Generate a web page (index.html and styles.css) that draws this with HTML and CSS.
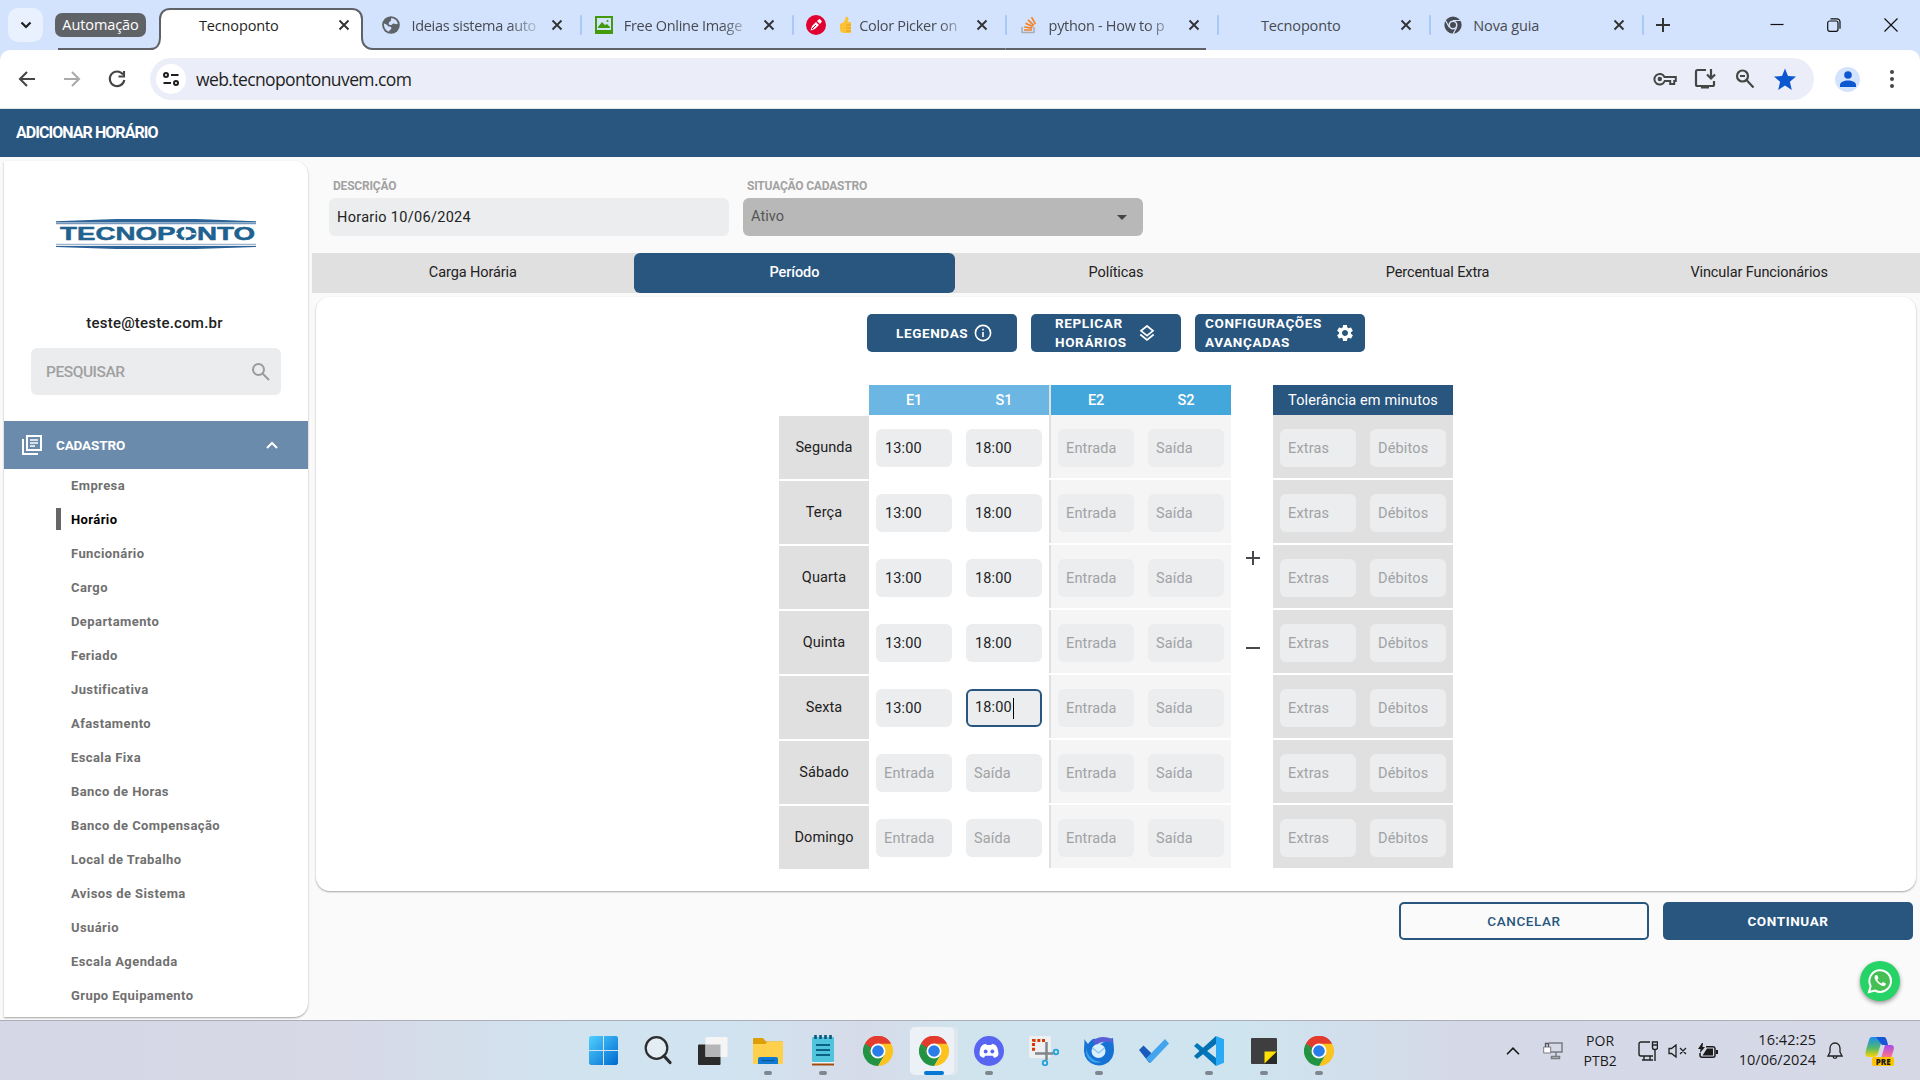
FILE: index.html
```html
<!DOCTYPE html>
<html lang="pt-BR">
<head>
<meta charset="utf-8">
<title>Tecnoponto</title>
<link rel="stylesheet" href="styles.css">
</head>
<body>
<svg class="defs" width="0" height="0">
  <symbol id="x" viewBox="0 0 12 12"><path d="M1.5 1.5l9 9M10.5 1.5l-9 9" stroke="currentColor" stroke-width="1.9" fill="none"/></symbol>
  <symbol id="chrome" viewBox="0 0 48 48">
    <path d="M24 24L3.2 12A24 24 0 0 1 44.8 12z" fill="#e33b2e"/>
    <path d="M24 12H44.8A24 24 0 0 1 24 48L34.4 30z" fill="#fcc31e"/>
    <path d="M3.2 12A24 24 0 0 0 24 48L34.4 30 24 34 13.6 30z" fill="#229342"/>
    <path d="M3.2 12A24 24 0 0 1 44.8 12H24L13.6 30z" fill="#e33b2e"/>
    <path d="M3.2 12L13.6 30 24 26z" fill="#229342"/>
    <circle cx="24" cy="24" r="12" fill="#fff"/><circle cx="24" cy="24" r="9.3" fill="#2a7de9"/>
  </symbol>
</svg>

<header class="tabstrip">
  <button class="tab-search"><svg width="12" height="8" viewBox="0 0 12 8"><path d="M1.5 1.5L6 6l4.500-4.500" fill="none" stroke="#1f1f1f" stroke-width="2.200"/></svg></button>
  <span class="group">Automação</span>
  <div class="tabs">
    <div class="tab active"><svg class="outline" width="336" height="42" viewBox="-100 0 336 42"><path d="M0 42h3c7 0 10-5 10-11V11c0-6 4-10 10-10h182c6 0 10 4 10 10v20c0 6 4 11 11 11z" fill="#fff"/><path d="M-89 41H3c7 0 10-5 10-11V11c0-6 4-10 10-10h182c6 0 10 4 10 10v19c0 6 4 11 11 11h10" fill="none" stroke="#5f6368" stroke-width="2"/></svg><i class="fav"></i><span class="title">Tecnoponto</span><svg class="close"><use href="#x"/></svg></div>
    <div class="tab grouped"><svg class="fav" viewBox="0 0 24 24"><circle cx="12" cy="12" r="11.800" fill="#5f6368"/><path d="M12 3c4 0 8 2.500 9 7-2 2-4 0-6 0-1 0-1 2-3 2s-3 0-3-2c0-3 4-2 3-7zM2.500 10c3 1 5 2 6 4 2 0 4 0 4 2 0 3-3 2-3 5-4-1-7-5-7-11z" fill="#d3e3fd"/></svg><span class="title fade">Ideias sistema auto</span><svg class="close"><use href="#x"/></svg></div>
    <div class="tab grouped"><svg class="fav" viewBox="0 0 18 18"><path d="M0 0h18v18H0zM2 2v12h14V2z" fill="#429a0d" fill-rule="evenodd"/><path d="M3 11l4-5 3 3 2-1 3 3v1H3z" fill="#429a0d"/><circle cx="12.500" cy="5" r="1" fill="#429a0d"/></svg><span class="title fade">Free Online Image</span><svg class="close"><use href="#x"/></svg></div>
    <div class="tab grouped"><svg class="fav wide" viewBox="0 0 20 20"><circle cx="10" cy="10" r="10" fill="#e1002f"/><path d="M4.500 15.500L6 11l4-4 3 3-4 4zM11 6l2.500-2.200 2.500 2.500L14 9z" fill="#fff"/><path d="M6 14l4-4" stroke="#e1002f"/></svg><svg class="thumb" width="13" height="18" viewBox="0 0 13 18"><path d="M1 8l4-2 2-5c2-1 3 1 2 5h3v11H5c-3 0-4-2-4-4z" fill="#fbc334"/><path d="M7 9h5M7 12h5M7 15h5" stroke="#e39a1b"/></svg><span class="title fade">Color Picker on</span><svg class="close"><use href="#x"/></svg></div>
    <div class="tab grouped last"><svg class="fav" viewBox="0 0 18 18"><path d="M2 11v5.500h12V11" fill="none" stroke="#a9adb2" stroke-width="1.500"/><path d="M4 14h8M4.300 11l8 1.200M5.500 7.300l7.300 3.300M8 3.800l5.800 5.500M11.500 1.200l4 7" stroke="#f48024" stroke-width="1.700"/></svg><span class="title fade">python - How to p</span><svg class="close"><use href="#x"/></svg></div>
    <div class="tab"><i class="fav"></i><span class="title">Tecnoponto</span><svg class="close"><use href="#x"/></svg></div>
    <div class="tab"><svg class="fav" viewBox="0 0 24 24"><circle cx="12" cy="12" r="11.500" fill="#474a50"/><path d="M12 6h11M7 15L2 6M17 15l-5 9" stroke="#d3e3fd" stroke-width="1.600"/><circle cx="12" cy="12" r="5" fill="#474a50" stroke="#d3e3fd" stroke-width="2"/></svg><span class="title">Nova guia</span><svg class="close"><use href="#x"/></svg></div>
  </div>
  <svg class="plus" width="14" height="14" viewBox="0 0 14 14"><path d="M7 0v14M0 7h14" stroke="#333" stroke-width="2"/></svg>
  <div class="winctl">
    <svg width="14" height="14" viewBox="0 0 14 14"><path d="M.5 6.500h13" stroke="#111" stroke-width="1.200"/></svg>
    <svg width="14" height="14" viewBox="0 0 14 14"><rect x=".7" y="3" width="10.300" height="10.300" rx="2" fill="none" stroke="#111" stroke-width="1.200"/><path d="M3.500.8H10a3 3 0 0 1 3 3v7" fill="none" stroke="#111" stroke-width="1.200"/></svg>
    <svg width="14" height="14" viewBox="0 0 14 14"><path d="M.5.5l13 13M13.500.5l-13 13" stroke="#111" stroke-width="1.200"/></svg>
  </div>
</header>

<div class="toolbar-back">
<div class="toolbar">
  <nav class="nav">
    <svg width="24" height="24" viewBox="0 0 24 24"><path d="M20 12H5M12 5l-7 7 7 7" fill="none" stroke="#444746" stroke-width="2.100"/></svg>
    <svg width="24" height="24" viewBox="0 0 24 24"><path d="M4 12h15M12 5l7 7-7 7" fill="none" stroke="#a9aaab" stroke-width="2.100"/></svg>
    <svg width="24" height="24" viewBox="0 0 24 24"><path d="M18 7.500A7.300 7.300 0 1 0 19.300 13M19 4v5.500h-5.500" fill="none" stroke="#444746" stroke-width="2.100"/></svg>
  </nav>
  <div class="omnibox">
    <span class="tune"><svg width="16" height="14" viewBox="0 0 16 14"><g fill="none" stroke="#1f1f1f" stroke-width="2"><circle cx="3" cy="3" r="2"/><path d="M8 3h7.500M.5 11H8"/><circle cx="13" cy="11" r="2"/></g></svg></span>
    <span class="url">web.tecnopontonuvem.com</span>
    <div class="actions">
      <svg width="24" height="24" viewBox="0 0 24 24"><g fill="none" stroke="#444746" stroke-width="2"><path d="M11.500 10H22.800v4h-1.600v3h-4v-3h-5.500A5.300 5.300 0 1 1 11.500 10z"/></g><circle cx="6.800" cy="12" r="2.200" fill="#444746"/></svg>
      <svg width="24" height="24" viewBox="0 0 24 24"><path d="M13 3H4.500A1.500 1.500 0 0 0 3 4.500v13A1.500 1.500 0 0 0 4.500 19h15a1.500 1.500 0 0 0 1.500-1.500V14M18 2v9M14 7.500l4 4 4-4M8 20.500h8" fill="none" stroke="#444746" stroke-width="2.200"/></svg>
      <svg width="24" height="24" viewBox="0 0 24 24"><g fill="none" stroke="#444746" stroke-width="2.200"><circle cx="9.500" cy="9" r="5.500"/><path d="M13.500 13l7 7.500M7 9h5"/></g></svg>
      <svg width="24" height="24" viewBox="0 0 24 24"><path d="M12 1.500l3 7.500 8 .6-6.100 5.200L18.800 23 12 18.600 5.200 23l1.900-8.200L1 9.600 9 9z" fill="#0b57d0"/></svg>
    </div>
  </div>
  <span class="avatar"><svg width="16" height="16" viewBox="0 0 16 16"><circle cx="8" cy="4" r="3.800" fill="#0b57d0"/><path d="M0 16v-2c0-3 4-4.500 8-4.500s8 1.500 8 4.500v2z" fill="#0b57d0"/></svg></span>
  <svg class="dots" width="4" height="18" viewBox="0 0 4 18"><circle cx="2" cy="2" r="2"/><circle cx="2" cy="9" r="2"/><circle cx="2" cy="16" r="2"/></svg>
</div>
</div>

<div class="apphead">ADICIONAR HORÁRIO</div>

<div class="app">
  <aside class="side">
    <svg class="logo" width="200" height="30" viewBox="0 0 200 30">
      <path d="M0 2.200L20 1.500 60 0h80l40 1.500 20 .7V3.500H0z" fill="#2b6297"/><path d="M0 4.600h200" stroke="#7698ba" stroke-width="1.200"/>
      <text class="logotext" x="4" y="21.300" textLength="195" lengthAdjust="spacingAndGlyphs">TECNOPONTO</text>
      <path d="M129 7v4M129 18.500v4M118 14.700h4M135.500 14.700h4" stroke="#fff" stroke-width="1.500"/>
      <path d="M0 25.500h200" stroke="#9db4cc" stroke-width="1.600"/><path d="M0 27h200v1l-60 2H60L0 28z" fill="#2b6297"/>
    </svg>
    <div class="email">teste@teste.com.br</div>
    <div class="search"><span>PESQUISAR</span><svg width="18" height="18" viewBox="0 0 18 18"><g fill="none" stroke="#9b9b9b" stroke-width="2"><circle cx="6.500" cy="6.500" r="5.500"/><path d="M10.500 10.500l6.500 6.500"/></g></svg></div>
    <div class="section"><svg width="20" height="20" viewBox="0 0 20 20"><path d="M1 4v15h15M5 1h14v14H5z" fill="none" stroke="#fff" stroke-width="2"/><path d="M8 5h8M8 8h8M8 11h5" stroke="#fff" stroke-width="1.600"/></svg><span>CADASTRO</span><svg class="chev" width="12" height="8" viewBox="0 0 12 8"><path d="M1 7l5-5 5 5" fill="none" stroke="#fff" stroke-width="2"/></svg></div>
    <ul class="menu">
      <li>Empresa</li><li class="sel">Horário</li><li>Funcionário</li><li>Cargo</li><li>Departamento</li><li>Feriado</li><li>Justificativa</li><li>Afastamento</li><li>Escala Fixa</li><li>Banco de Horas</li><li>Banco de Compensação</li><li>Local de Trabalho</li><li>Avisos de Sistema</li><li>Usuário</li><li>Escala Agendada</li><li>Grupo Equipamento</li>
    </ul>
  </aside>

  <main class="main">
    <div class="fields">
      <div class="field"><label>DESCRIÇÃO</label><div class="box">Horario 10/06/2024</div></div>
      <div class="field"><label>SITUAÇÃO CADASTRO</label><div class="box select"><span>Ativo</span><svg width="10" height="5" viewBox="0 0 10 5"><path d="M0 0h10L5 5z" fill="#444"/></svg></div></div>
    </div>
    <nav class="steps"><span>Carga Horária</span><span class="on">Período</span><span>Políticas</span><span>Percentual Extra</span><span>Vincular Funcionários</span></nav>

    <section class="card">
      <div class="tools">
        <button class="tool legend"><span>LEGENDAS</span><svg width="18" height="18" viewBox="0 0 18 18"><circle cx="9" cy="9" r="7.600" fill="none" stroke="#fff" stroke-width="1.600"/><path d="M9 8v5M9 4.800v1.700" stroke="#fff" stroke-width="1.600"/></svg></button>
        <button class="tool repl"><span>REPLICAR<br>HORÁRIOS</span><svg width="16" height="16" viewBox="0 0 16 16"><path d="M8 1l6 4.800-6 4.800-6-4.800zM1.300 9.500L8 14.800l6.700-5.300" fill="none" stroke="#fff" stroke-width="1.700"/></svg></button>
        <button class="tool conf"><span>CONFIGURAÇÕES<br>AVANÇADAS</span><svg width="20" height="20" viewBox="0 0 24 24"><path fill="#fff" d="M19.140 12.940c.04-.3.060-.61.060-.94 0-.32-.02-.64-.07-.94l2.030-1.580c.18-.14.230-.41.120-.61l-1.920-3.320c-.12-.22-.37-.29-.59-.22l-2.390.96c-.5-.38-1.030-.7-1.620-.94l-.36-2.540c-.04-.24-.24-.41-.48-.41h-3.840c-.24 0-.43.17-.47.41l-.36 2.540c-.59.24-1.130.57-1.620.94l-2.390-.96c-.22-.08-.47 0-.59.22L2.740 8.870c-.12.210-.08.470.120.610l2.030 1.580c-.05.3-.09.630-.09.940s.02.640.070.940l-2.030 1.580c-.18.140-.23.410-.12.610l1.920 3.320c.12.220.37.290.59.220l2.390-.96c.5.380 1.030.7 1.620.94l.36 2.540c.05.240.24.410.48.410h3.840c.24 0 .44-.17.470-.41l.36-2.540c.59-.24 1.130-.56 1.620-.94l2.390.96c.22.080.47 0 .59-.22l1.920-3.320c.12-.22.070-.47-.12-.61l-2.010-1.580zM12 15.600c-1.980 0-3.600-1.620-3.600-3.600s1.620-3.600 3.600-3.600 3.600 1.620 3.600 3.600-1.620 3.600-3.600 3.600z"/></svg></button>
      </div>

      <div class="sheet">
        <div class="days"><span>Segunda</span><span>Terça</span><span>Quarta</span><span>Quinta</span><span>Sexta</span><span>Sábado</span><span>Domingo</span></div>
        <div class="col first">
          <div class="head"><span>E1</span><span>S1</span></div>
          <div class="row val"><i>13:00</i><i>18:00</i></div>
          <div class="row val"><i>13:00</i><i>18:00</i></div>
          <div class="row val"><i>13:00</i><i>18:00</i></div>
          <div class="row val"><i>13:00</i><i>18:00</i></div>
          <div class="row val"><i>13:00</i><i class="focus">18:00<b></b></i></div>
          <div class="row"><i>Entrada</i><i>Saída</i></div>
          <div class="row"><i>Entrada</i><i>Saída</i></div>
        </div>
        <div class="col second">
          <div class="head"><span>E2</span><span>S2</span></div>
          <div class="row"><i>Entrada</i><i>Saída</i></div>
          <div class="row"><i>Entrada</i><i>Saída</i></div>
          <div class="row"><i>Entrada</i><i>Saída</i></div>
          <div class="row"><i>Entrada</i><i>Saída</i></div>
          <div class="row"><i>Entrada</i><i>Saída</i></div>
          <div class="row"><i>Entrada</i><i>Saída</i></div>
          <div class="row"><i>Entrada</i><i>Saída</i></div>
        </div>
        <div class="pm">
          <svg width="14" height="14" viewBox="0 0 14 14"><path d="M7 0v14M0 7h14" stroke="#47484d" stroke-width="2"/></svg>
          <svg width="14" height="14" viewBox="0 0 14 14"><path d="M0 7h14" stroke="#47484d" stroke-width="2"/></svg>
        </div>
        <div class="col tol">
          <div class="head"><span>Tolerância em minutos</span></div>
          <div class="row"><i>Extras</i><i>Débitos</i></div>
          <div class="row"><i>Extras</i><i>Débitos</i></div>
          <div class="row"><i>Extras</i><i>Débitos</i></div>
          <div class="row"><i>Extras</i><i>Débitos</i></div>
          <div class="row"><i>Extras</i><i>Débitos</i></div>
          <div class="row"><i>Extras</i><i>Débitos</i></div>
          <div class="row"><i>Extras</i><i>Débitos</i></div>
        </div>
      </div>
    </section>

    <div class="footer"><button class="btn cancel">CANCELAR</button><button class="btn go">CONTINUAR</button></div>
  </main>

  <div class="whats"><svg width="26" height="26" viewBox="0 0 26 26"><path d="M2 24l1.600-6A10.800 10.800 0 1 1 8 22.500z" fill="#45bf53" stroke="#fff" stroke-width="2"/><path d="M9 7c-2 1-2 4 1 7.200s6 4.800 8 3.300c1-.8 1-2 .5-2.300l-2.500-1.200-1.500 1.600c-2-.8-3.300-2-4.200-3.800l1.200-1.500-1-2.800C10.300 7 9.500 6.800 9 7z" fill="#fff"/></svg></div>
</div>

<footer class="taskbar">
  <div class="apps">
    <span class="app-ic"><svg width="29" height="29" viewBox="0 0 29 29"><defs><linearGradient id="w" x2="1" y2="1"><stop stop-color="#4fd0ff"/><stop offset="1" stop-color="#0069cf"/></linearGradient></defs><path d="M1.500 0H14v14H0V1.500zM15 0h12.500L29 1.500V14H15zM0 15h14v14H1.500L0 27.500zM15 15h14v12.500L27.500 29H15z" fill="url(#w)"/></svg></span>
    <span class="app-ic"><svg width="28" height="29" viewBox="0 0 28 29"><circle cx="12.500" cy="12" r="10.800" fill="#e4edf4" stroke="#2d2d2d" stroke-width="2.200"/><path d="M20 20l6 6.500" stroke="#2d2d2d" stroke-width="3.200" stroke-linecap="round"/></svg></span>
    <span class="app-ic"><svg width="30" height="28" viewBox="0 0 30 28"><rect y="7.500" width="22.500" height="20.500" rx="1" fill="#2b2b2b"/><rect x="7.500" width="22" height="20" rx="1" fill="#f5f5f5"/><path d="M7.500 7.500h15V20h-15z" fill="#b5b6b8"/></svg></span>
    <span class="app-ic run"><svg width="30" height="28" viewBox="0 0 30 28"><path d="M0 2a1 1 0 0 1 1-1h9l3 3.500H30V27H0z" fill="#dd9f06"/><path d="M0 7h12l3-2.500h15V27H0z" fill="#ffd04c"/><path d="M5 27v-5a2 2 0 0 1 2-2h16a2 2 0 0 1 2 2v5z" fill="#1079d0"/><path d="M8.500 23.500h13" stroke="#0c559c" stroke-width="1.200"/></svg></span>
    <span class="app-ic run"><svg width="24" height="31" viewBox="0 0 24 31"><path d="M1 28h22v2.500H1z" fill="#a04a10"/><path d="M1 26h22v2.500H1z" fill="#f1f1f1"/><rect x="1" y="2" width="22" height="25" rx="1" fill="#50c4dd"/><path d="M5 10h14M5 15h14M5 20h14" stroke="#0b6284" stroke-width="2"/><path d="M4.500 0v4M9.500 0v4M14.500 0v4M19.500 0v4" stroke="#0b5878" stroke-width="2.600"/></svg></span>
    <span class="app-ic"><svg width="30" height="30"><use href="#chrome"/></svg></span>
    <span class="app-ic current"><svg width="30" height="30"><use href="#chrome"/></svg></span>
    <span class="app-ic run"><svg width="30" height="30" viewBox="0 0 30 30"><circle cx="15" cy="15" r="15" fill="#5865f2"/><path d="M10.500 8.200l1.500-.5.700 1.200h4.600l.7-1.200 1.500.5c2.800.9 4 2 5 9 .3 2.500-1.500 4-4.500 4.500l-1.200-2h-7.600l-1.200 2c-3-.5-4.800-2-4.500-4.500.8-7 2.200-8.100 5-9z" fill="#fff"/><circle cx="11.700" cy="15.500" r="1.900" fill="#5865f2"/><circle cx="18.300" cy="15.500" r="1.900" fill="#5865f2"/></svg></span>
    <span class="app-ic"><svg width="30" height="30" viewBox="0 0 30 30"><rect width="22" height="22" rx="2" fill="#eeeff1"/><path d="M16 4.500H4.500V16" fill="none" stroke="#d83b01" stroke-width="3" stroke-dasharray="3 1.700"/><path d="M17.500 6v18M6 17.500h18" stroke="#81868b" stroke-width="2.500"/><circle cx="27" cy="16" r="2.300" fill="none" stroke="#22a1dc" stroke-width="1.800"/><circle cx="16" cy="27" r="2.300" fill="none" stroke="#22a1dc" stroke-width="1.800"/></svg></span>
    <span class="app-ic run"><svg width="30" height="30" viewBox="0 0 30 30"><path d="M0 3l4 5C7 4 9 2 12 3l3 6 10-6 4-1 .5 6C30.500 14 30 18 28 22A15 15 0 0 1 0 15C0 9 1 6 0 3z" fill="#1673d3"/><path d="M9 5C13 0 22 0 28 3l1 4C23 5 17 5 12 9z" fill="#5a5fd6"/><path d="M2 12c2 9 7 13 16 14-9 3-17-3-16-14z" fill="#3ba4f0"/><circle cx="14.500" cy="15" r="7" fill="#d9f0fe"/><path d="M8.500 12l6 5 6-5" fill="none" stroke="#8cc3ee" stroke-width="1.300"/></svg></span>
    <span class="app-ic"><svg width="30" height="24" viewBox="0 0 30 24"><path d="M0 11l4.500-4.500 10 9.800L10.500 24z" fill="#195abd"/><path d="M26 0l4 4.500L11.500 24 7 19.500z" fill="#42a5ee"/></svg></span>
    <span class="app-ic run"><svg width="30" height="30" viewBox="0 0 30 30"><path d="M0 10l3-3 19 15v8L0 10z" fill="#0178bd"/><path d="M0 20l3 3L22 8V0z" fill="#0071b3"/><path d="M22 0l8 3.200v23.600L22 30z" fill="#2aaaf4"/></svg></span>
    <span class="app-ic run"><svg width="26" height="26" viewBox="0 0 26 26"><rect width="26" height="26" rx="1" fill="#3e3e3e"/><path d="M13.500 13.500H26L13.500 25.500z" fill="#ffe000"/><path d="M26 13.500v12.500H13.500z" fill="#292929"/></svg></span>
    <span class="app-ic run"><svg width="30" height="30"><use href="#chrome"/></svg></span>
  </div>
  <div class="tray">
    <svg width="14" height="8" viewBox="0 0 14 8"><path d="M1 7.200l6-6 6 6" fill="none" stroke="#1a1a1a" stroke-width="1.600"/></svg>
    <svg class="lock" width="20" height="19" viewBox="0 0 20 19"><g fill="none" stroke="#7a7a83" stroke-width="1.500"><path d="M6 2h13v9H8M13 11v4M8.500 17.500h8v-2h-8z"/></g><path d="M.7 6h7v6h-7z" fill="#fff" stroke="#7a7a83"/><path d="M2.500 6V2.500h3V6" fill="none" stroke="#555" stroke-width="1.300"/></svg>
    <div class="lang"><span>POR</span><span>PTB2</span></div>
    <svg class="net" width="20" height="20" viewBox="0 0 20 20"><path d="M12 1H3a2 2 0 0 0-2 2v10a2 2 0 0 0 2 2h12M6 15v3.500M4 19h11M12 15v4M14.500 1h5v5.500a2 2 0 0 1-2 2h-1a2 2 0 0 1-2-2zM14.500 4h5M17 8.500V20" fill="none" stroke="#222" stroke-width="1.400"/></svg>
    <svg class="vol" width="19" height="14" viewBox="0 0 19 14"><path d="M1 4.500h2.500L8 1v12L3.500 9.500H1zM12 4l6 6M18 4l-6 6" fill="none" stroke="#222" stroke-width="1.300"/></svg>
    <svg class="bat" width="20" height="16" viewBox="0 0 20 16"><path d="M8 3.700h7a2 2 0 0 1 2 2v6.500a2 2 0 0 1-2 2H4a2 2 0 0 1-2-2V10" fill="none" stroke="#1b1b1b" stroke-width="1.500"/><path d="M9 5.500h6v7H4.500zM18 7h2v4h-2zM4 0L0 6h2.500L2 10l5-6H4.500L5 0z" fill="#1b1b1b"/></svg>
    <div class="clock"><span>16:42:25</span><span>10/06/2024</span></div>
    <svg class="bell" width="16" height="18" viewBox="0 0 16 18"><path d="M8 1C4.800 1 3 3.500 3 6.500V10l-2 4h14l-2-4V6.500C13 3.500 11.200 1 8 1zM6 14.500c.3 2.500 3.700 2.500 4 0" fill="none" stroke="#222" stroke-width="1.300"/></svg>
    <div class="copilot"><svg width="30" height="28" viewBox="0 0 30 28"><defs><linearGradient id="c1" x2="0" y2="1"><stop stop-color="#1a8cf0"/><stop offset=".55" stop-color="#52b96b"/><stop offset="1" stop-color="#ffd500"/></linearGradient><linearGradient id="c2" x2="0" y2="1"><stop stop-color="#a44bf0"/><stop offset=".6" stop-color="#f0699c"/><stop offset="1" stop-color="#ff9a45"/></linearGradient></defs><path d="M7 0h11l-5 16c-1 3-2 4-5 4H4c-4 0-4-3-3-7L4 3c.6-2 1.500-3 3-3z" fill="url(#c1)"/><path d="M11 0h8c2 0 3 3 4 8h-6z" fill="#1756d6"/><path d="M20 8h6c4 0 3 4 2 7l-3 9H12c3 0 4-2 5-6z" fill="url(#c2)"/></svg><span>PRE</span></div>
  </div>
</footer>
</body>
</html>
```
FILE: styles.css
```css
* { box-sizing: border-box; }
body { margin: 0; width: 1920px; height: 1080px; overflow: hidden; display: flex; flex-direction: column; background: #fafafa; font-family: Roboto, sans-serif; color: #222; }
svg { display: block; flex: none; }
button { border: 0; padding: 0; font-family: inherit; }
i { font-style: normal; }
.defs { position: absolute; }

/* browser tabs */
.tabstrip { height: 50px; flex: none; display: flex; align-items: center; background: #d3e3fd; padding-left: 8px; font-family: "Open Sans", sans-serif; }
.tab-search { width: 35px; height: 34px; border-radius: 10px; background: #e9f0fe; display: flex; align-items: center; justify-content: center; }
.group { width: 91px; height: 24px; margin-left: 12px; border-radius: 7px; background: #5f6368; color: #fff; font-size: 14.500px; line-height: 23px; text-align: center; letter-spacing: -.1px; }
.tabs { display: flex; height: 50px; margin-left: 10px; }
.tab { position: relative; width: 212.400px; height: 50px; display: flex; align-items: center; padding: 0 18px 0 14px; color: #474a50; }
.tab::after { content: ""; position: absolute; right: -1px; top: 15px; width: 2px; height: 20px; background: #a8c7fa; border-radius: 1px; }
.tab.active::after { display: none; }
.tab.grouped { background: linear-gradient(#5f6368, #5f6368) bottom / 100% 2px no-repeat; }
.tab.active + .grouped { background-position: right bottom; background-size: 200px 2px; }
.tab.last { background-position: left bottom; background-size: 200px 2px; }
.tab .outline { position: absolute; left: -109px; top: 8px; }
.active { color: #1f1f1f; }
.fav { width: 18px; height: 18px; flex: none; }
.fav.wide { width: 20px; height: 20px; margin-left: -1px; margin-right: -1px; }
.thumb { margin-left: 14px; margin-right: -4px; }
.title { position: relative; margin: 1px 0 0 11px; flex: 1; min-width: 0; white-space: nowrap; font-size: 14.500px; line-height: 24px; letter-spacing: -.3px; }
.fade { -webkit-mask-image: linear-gradient(90deg, #000 78%, rgba(0,0,0,.2)); mask-image: linear-gradient(90deg, #000 78%, rgba(0,0,0,.2)); }
.tab:not(.grouped) .title { letter-spacing: -.15px; }
.close { position: relative; width: 12px; height: 12px; margin-left: 14px; color: #333; }
.plus { margin-left: 13px; }
.winctl { display: flex; gap: 43px; margin-left: auto; margin-right: 22px; }

/* browser toolbar */
.toolbar-back { background: #d3e3fd; flex: none; }
.toolbar { height: 59px; display: flex; align-items: center; background: #fff; border-radius: 10px 10px 0 0; border-bottom: 1px solid #dfe5e2; }
.nav { display: flex; gap: 21px; margin-left: 15px; }
.omnibox { width: 1664px; height: 42px; margin-left: 21px; border-radius: 21px; background: #ebeef8; display: flex; align-items: center; padding-left: 6px; }
.tune { width: 30px; height: 30px; border-radius: 50%; background: #fff; display: flex; align-items: center; justify-content: center; }
.url { margin-left: 10px; font: 17.500px "Open Sans", sans-serif; letter-spacing: -.6px; color: #1f1f1f; }
.actions { display: flex; gap: 16px; margin-left: auto; margin-right: 17px; }
.avatar { width: 25px; height: 25px; border-radius: 50%; background: #d3e3fd; margin-left: 21px; display: flex; align-items: center; justify-content: center; }
.dots { margin-left: 30px; fill: #444746; }

/* application */
.apphead { height: 48px; flex: none; background: #29567f; color: #fff; font-weight: 700; font-size: 16px; line-height: 48px; padding-left: 16px; letter-spacing: -.95px; }
.app { position: relative; height: 863px; flex: none; display: flex; background: #fafafa; }
.side { width: 304px; height: 856px; margin: 4px 4px 0; background: #fff; border-radius: 0 14px 14px 0; box-shadow: 0 1px 2px rgba(0,0,0,.35); overflow: hidden; }
.logo { margin: 58px 0 0 52px; }
.logotext { font: bold 19px "Liberation Sans", sans-serif; fill: #1f628f; stroke: #1f628f; stroke-width: .5; }
.email { margin-top: 62px; text-align: center; font-size: 15px; line-height: 24px; font-weight: 500; letter-spacing: .22px; padding-right: 3px; color: #222; }
.search { width: 250px; height: 47px; margin: 13px 0 0 27px; border-radius: 6px; background: #ebecee; display: flex; align-items: center; justify-content: space-between; padding: 0 11px 0 15px; color: #a0a0a0; font-size: 15.500px; font-weight: 500; letter-spacing: -.45px; }
.section { height: 48px; margin-top: 26px; background: #6a8bab; color: #fff; display: flex; align-items: center; padding-left: 18px; font-weight: 700; font-size: 13.500px; }
.section span { margin: -1px 0 0 14px; letter-spacing: -.15px; }
.chev { margin-left: auto; margin-right: 30px; }
.menu { list-style: none; margin: 0; padding: 0; color: #707070; font-size: 13px; font-weight: 700; letter-spacing: .41px; }
.menu li { height: 34px; line-height: 33px; padding-left: 67px; }
.menu .sel { color: #000; background: linear-gradient(#666, #666) 52px 5px / 5px 22px no-repeat; }

.main { flex: 1; }
.fields { display: flex; gap: 14px; padding: 20px 17px 0; }
.field { width: 400px; }
.field label { display: block; height: 21px; line-height: 18px; padding-left: 4px; font-size: 12px; font-weight: 700; color: #a2a2a2; letter-spacing: -.2px; }
.box { height: 38px; border-radius: 6px; background: #ebedef; padding-left: 8px; line-height: 39px; font-size: 14.500px; letter-spacing: .3px; color: #222; }
.select { background: #b8b8b8; color: #555; display: flex; justify-content: space-between; align-items: center; line-height: 37px; padding-right: 16px; }
.select span { margin-bottom: 2px; letter-spacing: .05px; }
.steps { display: flex; height: 40px; margin-top: 17px; background: #e0e0e0; font-size: 14.500px; letter-spacing: -.1px; }
.steps span { flex: 1; text-align: center; line-height: 39px; }
.steps .on { background: #29567f; border-radius: 6px; color: #fff; font-weight: 500; }
.card { height: 594px; margin: 4px 4px 0; background: #fff; border-radius: 14px; box-shadow: 0 1px 2px rgba(0,0,0,.35); }
.tools { display: flex; gap: 14px; padding: 17px 0 0 551px; }
.tool { height: 38px; border-radius: 5px; background: #29567f; color: #fff; display: flex; align-items: center; font-size: 13.500px; font-weight: 700; letter-spacing: .63px; line-height: 19px; text-align: left; }
.legend { width: 150px; padding-left: 29px; gap: 6px; }
.repl { width: 150px; padding-left: 24px; justify-content: space-between; padding-right: 26px; }
.conf { width: 170px; padding: 0 10px; justify-content: space-between; }
.sheet { display: flex; padding: 33px 0 0 463px; font-size: 14.500px; }
.days { width: 90px; padding-top: 31px; display: flex; flex-direction: column; gap: 2px; }
.days span { height: 63px; background: #e0e0e0; text-align: center; line-height: 64px; letter-spacing: .1px; }
.col { width: 180px; }
.second { width: 182px; }
.second .head, .second .row { border-left: 2px solid #e0e0e0; }
.head { height: 30px; display: flex; background: #6bb6e2; color: #fff; font-weight: 500; line-height: 31px; }
.head span { flex: 1; text-align: center; letter-spacing: -.1px; }
.second .head { background: #44a7db; }
.tol .head { background: #29567f; }
.tol .head span { font-weight: 400; letter-spacing: .13px; }
.row { height: 63px; margin-bottom: 2px; display: flex; gap: 14px; padding: 14px 7px 0; }
.second .row { background: #f5f5f5; }
.tol .row { background: #e0e0e0; }
.row i { width: 76px; height: 38px; border-radius: 6px; background: #ebedef; padding-left: 8px; line-height: 39px; color: #a1a2a4; letter-spacing: .15px; }
.row.val i { color: #222; padding-left: 9px; line-height: 40px; }
.row.val i.focus { border: 2px solid #29567f; padding-left: 7px; line-height: 36px; display: flex; align-items: center; }
.focus b { width: 1px; height: 21px; background: #000; margin-left: 1px; }
.pm { width: 42px; padding: 166px 0 0 15px; display: flex; flex-direction: column; gap: 76px; }
.footer { display: flex; justify-content: flex-end; gap: 14px; padding: 11px 7px 0 0; }
.btn { width: 250px; height: 38px; border-radius: 5px; font-size: 13.500px; font-weight: 700; letter-spacing: .6px; }
.cancel { border: 2px solid #29567f; background: #fafafa; color: #29567f; font-weight: 500; }
.go { background: #29567f; color: #fff; }
.whats { position: absolute; left: 1860px; top: 804px; width: 40px; height: 40px; border-radius: 50%; background: #25d366; box-shadow: 0 2px 4px rgba(0,0,0,.4); display: flex; align-items: center; justify-content: center; }

/* taskbar */
.taskbar { height: 60px; display: flex; align-items: center; border-top: 1px solid #a9aeb8; background: linear-gradient(90deg, #d6d7e6 0, #d7d9e7 18%, #d0e4f0 31%, #d1e3f0 38%, #d6dbe9 45%, #d0e4ee 50%, #cee4ef 65%, #d5d9e7 76%, #d6d8e6 100%); font-family: "Open Sans", sans-serif; }
.apps { display: flex; margin-left: 575px; }
.app-ic { position: relative; width: 55.080px; height: 48px; display: flex; align-items: center; justify-content: center; }
.run::after, .current::after { content: ""; position: absolute; left: 24px; bottom: 0; width: 8px; height: 4px; border-radius: 2px; background: #7e868e; }
.current::before { content: ""; position: absolute; left: 5px; top: 0; width: 44px; height: 48px; border-radius: 5px; background: #ecf1f7; box-shadow: 4px 0 0 #dfe6ee; }
.app-ic svg { position: relative; left: .5px; }
.current::after { left: 19px; width: 20px; background: #0078d4; }
.tray { display: flex; align-items: center; margin-left: 160px; color: #1b1b1b; font-size: 14.500px; line-height: 20px; }
.lock { margin-left: 23px; }
.lang, .clock { display: flex; flex-direction: column; }
.lang { width: 54px; margin-left: 10px; text-align: center; font-size: 14px; }
.net { margin-left: 11px; }
.vol { margin-left: 10px; }
.bat { margin-left: 11px; }
.clock { width: 90px; margin: -2px 0 0 8px; text-align: right; letter-spacing: .05px; }
.bell { margin-left: 11px; }
.copilot { position: relative; margin-left: 22px; height: 28px; }
.copilot span { position: absolute; left: 7px; top: 20px; width: 22px; height: 9px; border-radius: 2px; background: #ffc400; font-size: 8px; line-height: 9px; font-weight: 800; text-align: center; }
```
